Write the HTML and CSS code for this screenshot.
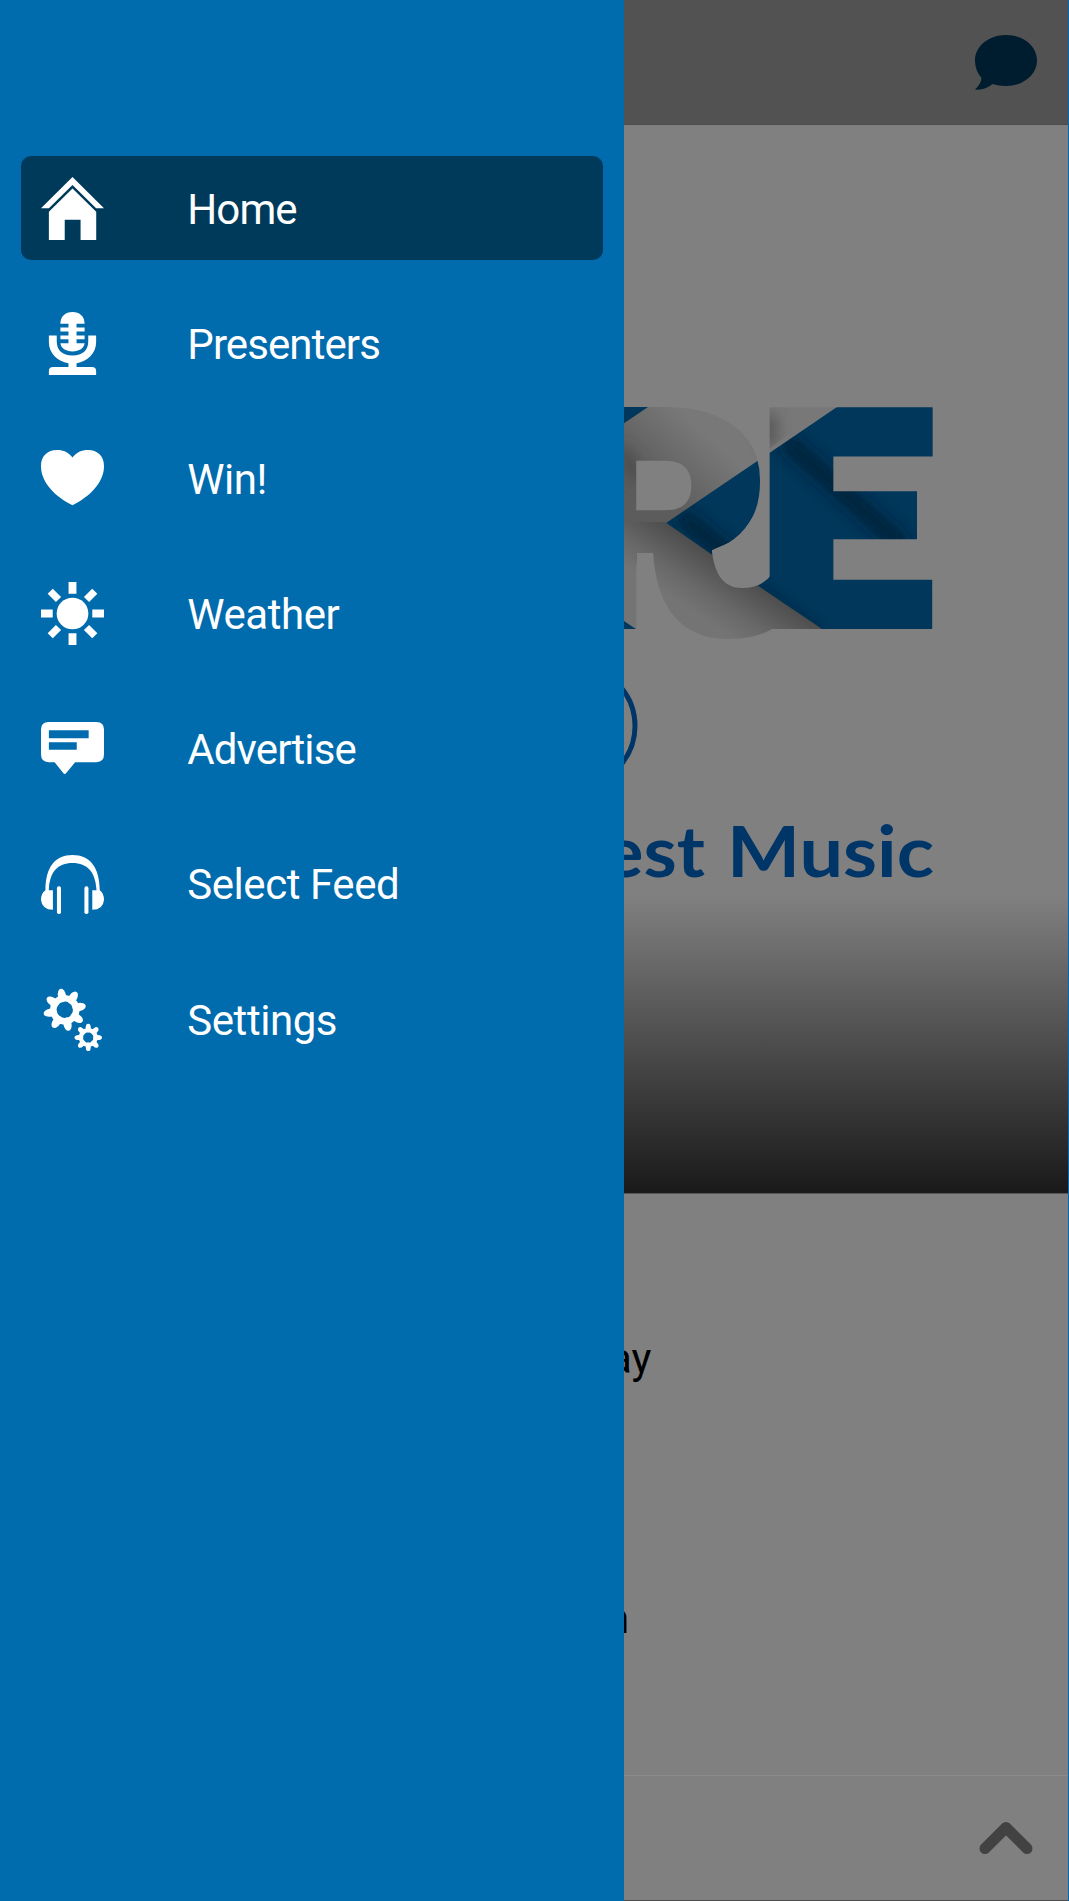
FILE: index.html
```
<!DOCTYPE html>
<html lang="en">
<head>
  <meta charset="UTF-8">
  <meta name="viewport" content="width=device-width, initial-scale=1.0">
  <title>Radio</title>
  <link rel="stylesheet" href="styles.css">
</head>
<body>

<div class="app">
  <nav class="drawer">
    <a class="menu-item active tight">
      <svg class="icon" viewBox="0 0 62.4 62.4">
        <path d="M31.2 0L62.4 31H54.6L31.2 8L7.8 31H0z"/>
        <path d="M31.2 11.3L54.7 34.3V62.4H39.2V42.3H23.5V62.4H7.8V34.3z"/>
      </svg>
      <span>Home</span>
    </a>
    <a class="menu-item tight">
      <svg class="icon" viewBox="0 0 62.4 62.4">
        <path d="M19.2 11.6C19.2 4.5 24 0 31.2 0S43.2 4.5 43.2 11.6H35.2V15.4H43.2V19.3H35.2V23.2H43.2V27.1H35.2V31H43.2C42.5 36 38 39 31.2 39S19.9 36 19.2 31H27.2V27.1H19.2V23.2H27.2V19.3H19.2V15.4H27.2V11.6z"/>
        <path d="M7.8 23.2H15.6V29C15.6 38 21 43 31.2 43S46.8 38 46.8 29V23.2H54.6V30C54.6 41 46 49.3 35.2 50.7V54.4H50.5Q54.6 54.4 54.6 58.5V62.4H7.8V58.5Q7.8 54.4 12 54.4H27.2V50.7C16.4 49.3 7.8 41 7.8 30z"/>
      </svg>
      <span>Presenters</span>
    </a>
    <a class="menu-item">
      <svg class="icon" viewBox="0 0 62.4 62.4">
        <path d="M31.2 10.3C35 5.5 40 3 46.5 3C56 3 62.4 9 62.4 19C62.4 35 49 48.5 31.2 57.8C13.4 48.5 0 35 0 19C0 9 6.4 3 15.9 3C22.4 3 27.4 5.5 31.2 10.3z"/>
      </svg>
      <span>Win!</span>
    </a>
    <a class="menu-item">
      <svg class="icon" viewBox="-31.2 -31.2 62.4 62.4">
        <circle r="15.7"/>
        <path d="M-3.9 -31.2H3.9V-19.6H-3.9zM-3.9 19.6H3.9V31.2H-3.9zM-31.2 -3.9H-19.6V3.9H-31.2zM19.6 -3.9H31.2V3.9H19.6z"/>
        <path transform="rotate(45)" d="M-3.6 -31.2H3.6V-19.6H-3.6zM-3.6 19.6H3.6V31.2H-3.6zM-31.2 -3.6H-19.6V3.6H-31.2zM19.6 -3.6H31.2V3.6H19.6z"/>
      </svg>
      <span>Weather</span>
    </a>
    <a class="menu-item tight">
      <svg class="icon" viewBox="0 0 62.4 62.4">
        <path fill-rule="evenodd" d="M7.5 5H55Q62.4 5 62.4 12.5V37Q62.4 44.7 55 44.7H33.8L25 55.5Q23.5 57.4 22 55.5L13.5 44.7H7.5Q0 44.7 0 37V12.5Q0 5 7.5 5zM7.8 13.2V21H47.2V13.2zM7.8 25V32.5H35.4V25z"/>
      </svg>
      <span>Advertise</span>
    </a>
    <a class="menu-item">
      <svg class="icon" viewBox="0 0 62.4 62.4">
        <path d="M4.4 38C4.4 15 14 3 31.2 3S58 15 58.2 38Q62.4 41 62.4 47.5Q61.5 57 50.8 57.3V37.8H55C54 20 46 11 31.2 11S8.4 20 7.8 37.8H11.8V57.3Q1 57 0 47.5Q0 41 4.4 38z"/>
        <rect x="15.8" y="34" width="4" height="27.5" rx="1.8"/>
        <rect x="43" y="34" width="4" height="27.5" rx="1.8"/>
      </svg>
      <span>Select Feed</span>
    </a>
    <a class="menu-item">
      <svg class="icon" viewBox="0 0 62.4 62.4">
        <defs>
          <g id="gear">
            <circle r="11.4" fill="none" stroke="#fff" stroke-width="6.6"/>
            <g id="teeth">
              <ellipse cy="-14.5" rx="4" ry="6.7"/>
              <ellipse cy="14.5" rx="4" ry="6.7"/>
              <ellipse cx="-14.5" rx="6.7" ry="4"/>
              <ellipse cx="14.5" rx="6.7" ry="4"/>
            </g>
            <use href="#teeth" transform="rotate(45)"/>
          </g>
        </defs>
        <use href="#gear" transform="translate(23.5 21.6) rotate(-11)"/>
        <use href="#gear" transform="translate(46.8 49) scale(.64)"/>
      </svg>
      <span>Settings</span>
    </a>
  </nav>

  <main class="page">
    <header class="topbar">
      <svg class="bubble" viewBox="0 0 62 55">
        <path d="M31 0C48 0 62 11 62 25.5S48 51 31 51Q23.5 51 17.5 49Q10 55.5 0 54.5Q6 49 6.5 43Q0 35.5 0 25.5C0 11 14 0 31 0z"/>
      </svg>
    </header>

    <section class="artwork">
      <svg class="logo" viewBox="624 125 444 1068">
        <defs>
          <filter id="soft" filterUnits="userSpaceOnUse" x="560" y="360" width="420" height="320">
            <feGaussianBlur stdDeviation="8"/>
          </filter>
          <linearGradient id="upper" gradientUnits="userSpaceOnUse" x1="640" y1="475" x2="690" y2="420">
            <stop offset="0" stop-color="#5c5c5c"/>
            <stop offset="1" stop-color="#787878"/>
          </linearGradient>
          <linearGradient id="lower" gradientUnits="userSpaceOnUse" x1="740" y1="574" x2="708" y2="622">
            <stop offset="0" stop-color="#4e4e4e"/>
            <stop offset=".6" stop-color="#686868"/>
            <stop offset="1" stop-color="#747474"/>
          </linearGradient>
          <clipPath id="bowl"><path d="M560 400H765V500L738 539L712 550V553H637V629H560z"/></clipPath>
          <clipPath id="fold"><path d="M560 400H837L666 523H560z"/></clipPath>
          <mask id="letters" maskUnits="userSpaceOnUse" x="560" y="380" width="420" height="280">
            <g fill="#fff" stroke="#fff">
              <g clip-path="url(#bowl)">
                <text class="mark" x="556" y="637" font-size="315" stroke-width="12" textLength="214" lengthAdjust="spacingAndGlyphs">R</text>
              </g>
              <text class="mark" x="758" y="624" font-size="298" stroke-width="10" textLength="174" lengthAdjust="spacingAndGlyphs">E</text>
              <path stroke="none" d="M653 552H712C715 575 724 588 742 588Q762 588 772 574V629Q755 639 727 639C680 639 656 605 653 552z"/>
            </g>
          </mask>
        </defs>
        <g mask="url(#letters)">
          <rect x="560" y="380" width="400" height="280" fill="#00375a"/>
          <g filter="url(#soft)" stroke="#001f33" stroke-width="14" fill="none">
            <path d="M785 440L905 548"/>
            <path d="M680 515L735 560"/>
            <path d="M750 592L815 640"/>
          </g>
          <path d="M648 407H837L666 523H560V467z" fill="url(#upper)"/>
          <path d="M600 522H665L711 554L822 629V650H667L600 605z" fill="url(#lower)"/>
          <g clip-path="url(#fold)">
            <g filter="url(#soft)" stroke="#4a4a4a" stroke-width="12" fill="none">
              <path d="M769 415V446"/>
              <path d="M620 450L640 480"/>
            </g>
          </g>
        </g>
        <circle cx="575" cy="726" r="60" fill="none" stroke="#003567" stroke-width="5"/>
        <g class="slogan">
          <text x="603" y="877" textLength="102" lengthAdjust="spacingAndGlyphs">est</text>
          <text x="727" y="877" textLength="207" lengthAdjust="spacingAndGlyphs">Music</text>
        </g>
      </svg>
    </section>

    <section class="info">
      <p class="day">ay</p>
      <p class="show">n</p>
    </section>

    <footer class="player">
      <svg class="chevron" viewBox="0 0 54 34">
        <path d="M6 27.5L27 6.5L48 27.5"/>
      </svg>
    </footer>
  </main>
</div>

</body>
</html>
```
FILE: styles.css
```
* {
  box-sizing: border-box;
}
body {
  margin: 0;
  font-family: Roboto, sans-serif;
  background-color: #006bad;
}
.app {
  display: flex;
  width: 1068px;
  height: 1901px;
}
/* Side menu */
.drawer {
  display: flex;
  flex-direction: column;
  gap: 31.2px;
  flex: none;
  width: 624px;
  padding: 156px 21px 0;
  background-color: #006bad;
}
.menu-item {
  display: flex;
  align-items: center;
  gap: 83.3px;
  height: 104px;
  padding-left: 20px;
  border-radius: 10px;
  color: #fff;
  font-size: 42px;
  letter-spacing: -0.45px;
}
.menu-item.tight {
  letter-spacing: -0.9px;
}
.menu-item span {
  padding-top: 2px;
}
.menu-item.active {
  background-color: #003a5b;
}
.icon {
  width: 63px;
  height: 63px;
  fill: #fff;
}
/* Dimmed page behind the menu */
.page {
  display: flex;
  flex-direction: column;
  width: 444px;
  overflow: hidden;
  background-color: #808080;
  border-bottom: 1px solid #4c4c4c;
}
.topbar {
  display: flex;
  justify-content: flex-end;
  height: 125px;
  padding: 35px 31px 0 0;
  background-color: #525252;
  border-bottom: 1px solid #4c4c4c;
}
.bubble {
  width: 62px;
  height: 55px;
  fill: #001d2f;
}
.artwork {
  height: 1069px;
  background: linear-gradient(#808080 770px, #1a1a1a 1066px);
  border-bottom: 1px solid #555;
}
.logo {
  display: block;
  width: 444px;
  height: 1068px;
}
.mark {
  font-family: Roboto, sans-serif;
  font-weight: 900;
}
.slogan {
  font-family: Lato, sans-serif;
  font-size: 71px;
  font-weight: 700;
  fill: #003567;
}
.info {
  height: 581px;
  padding-top: 140px;
  color: #000;
  font-size: 42px;
  line-height: 50px;
}
.info p {
  margin: 0;
}
.info .day {
  margin-left: -15px;
}
.info .show {
  padding-top: 210px;
  margin-left: -18px;
}
.player {
  display: flex;
  justify-content: flex-end;
  flex: 1;
  padding: 45px 35px 0 0;
  border-top: 1px solid #8b8b8b;
}
.chevron {
  width: 54px;
  height: 34px;
  fill: none;
  stroke: #424242;
  stroke-width: 11;
  stroke-linecap: round;
  stroke-linejoin: round;
}
```
